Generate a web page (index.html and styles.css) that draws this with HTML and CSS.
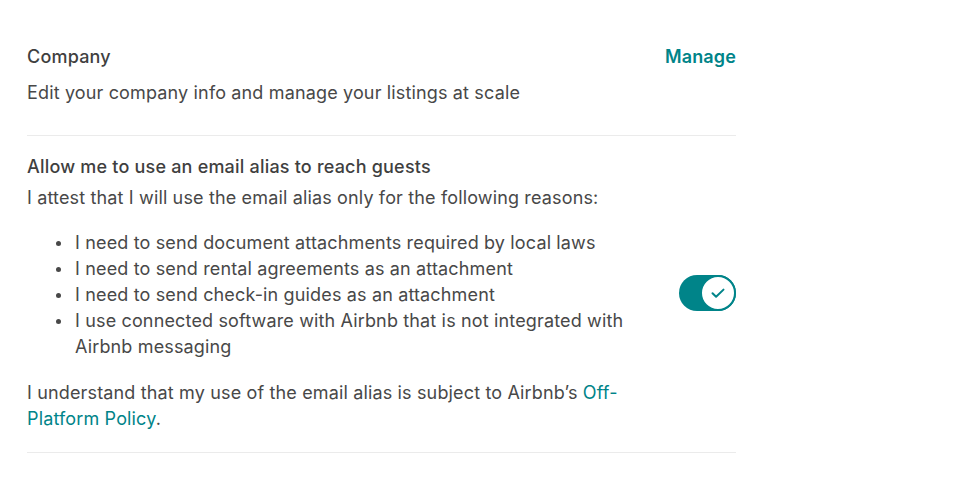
FILE: index.html
```html
<!DOCTYPE html>
<html lang="en">
<head>
  <meta charset="UTF-8">
  <meta name="viewport" content="width=device-width, initial-scale=1.0">
  <title>Account - Professional hosting tools</title>
  <link rel="stylesheet" href="styles.css">
</head>
<body>
  <div class="settings">
    <div class="setting company">
      <div class="setting-text">
        <h3>Company</h3>
        <p class="desc">Edit your company info and manage your listings at scale</p>
      </div>
      <a class="manage-link" href="#">Manage</a>
    </div>

    <div class="setting alias">
      <div class="setting-text">
        <h3>Allow me to use an email alias to reach guests</h3>
        <p class="desc">I attest that I will use the email alias only for the following reasons:</p>
        <ul class="reasons">
          <li>I need to send document attachments required by local laws</li>
          <li>I need to send rental agreements as an attachment</li>
          <li>I need to send check-in guides as an attachment</li>
          <li>I use connected software with Airbnb that is not integrated with Airbnb messaging</li>
        </ul>
        <p class="desc">I understand that my use of the email alias is subject to Airbnb’s <a href="#">Off-Platform Policy</a>.</p>
      </div>
      <button class="switch on" type="button" role="switch" aria-checked="true">
        <span class="knob">
          <svg viewBox="0 0 16 16" width="16" height="16" aria-hidden="true">
            <path d="M2.5 8.2l3.6 3.6L13.5 4.6" fill="none" stroke="currentColor" stroke-width="2" stroke-linecap="round" stroke-linejoin="round"/>
          </svg>
        </span>
      </button>
    </div>
  </div>
</body>
</html>
```
FILE: styles.css
```css
* {
  box-sizing: border-box;
  margin: 0;
  padding: 0;
}

body {
  font-family: Inter, 'Noto Sans', sans-serif;
  color: #484848;
  background: #ffffff;
  font-size: 18px;
  line-height: 26px;
  letter-spacing: 0.15px;
}

.settings {
  width: 709px;
  margin-left: 27px;
  padding-top: 44px;
}

.setting {
  display: flex;
  justify-content: space-between;
  border-bottom: 1px solid #ebebeb;
}

.company {
  align-items: flex-start;
  padding-bottom: 29px;
}

.alias {
  align-items: center;
  padding: 18px 0 20px;
}

.setting-text {
  width: 610px;
}

h3 {
  font-size: 18px;
  font-weight: 500;
  color: #3f3f3f;
  line-height: 26px;
  letter-spacing: 0.2px;
}

.company h3 {
  margin-bottom: 10px;
}

.alias h3 {
  margin-bottom: 5px;
}

.manage-link {
  color: #008489;
  font-weight: 600;
  text-decoration: none;
  line-height: 26px;
}

.desc a {
  color: #008489;
  text-decoration: none;
}

.reasons {
  list-style: none;
  margin: 19px 0 20px 48px;
}

.reasons li {
  position: relative;
}

.reasons li::before {
  content: "";
  position: absolute;
  left: -19px;
  top: 11px;
  width: 5px;
  height: 5px;
  border-radius: 50%;
  background: #484848;
}

.switch {
  width: 57px;
  height: 36px;
  border: none;
  border-radius: 18px;
  background: #008489;
  cursor: pointer;
  display: flex;
  justify-content: flex-end;
  padding: 0;
}

.knob {
  width: 36px;
  height: 36px;
  border-radius: 50%;
  background: #ffffff;
  border: 2px solid #008489;
  color: #008489;
  display: flex;
  align-items: center;
  justify-content: center;
}
```
